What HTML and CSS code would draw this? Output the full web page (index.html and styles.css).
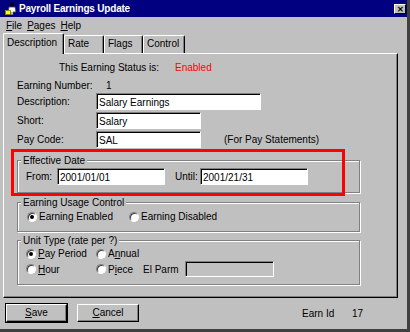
FILE: index.html
```html
<!DOCTYPE html>
<html lang="en">
<head>
  <meta charset="UTF-8" />
  <title>Payroll Earnings Update</title>
  <link rel="stylesheet" href="styles.css">
</head>
<body>
  <div class="window">
    <div class="titlebar">
      <svg class="app-icon" width="12" height="13" viewBox="0 0 12 13">
        <circle cx="7" cy="2.5" r="2" fill="#000"/>
        <path d="M4 5 L10 5 L11 10 L8 10 L8 13 L6 13 L6 10 L3 10 Z" fill="#fff" stroke="#404040" stroke-width="0.8"/>
        <rect x="0.5" y="8.5" width="5" height="4" fill="#ffff00" stroke="#808000" stroke-width="0.8"/>
      </svg>
      <span class="title">Payroll Earnings Update</span>
      <span class="close">&#x2715;</span>
    </div>

    <div class="menubar">
      <span class="menu-item"><u>F</u>ile</span>
      <span class="menu-item"><u>P</u>ages</span>
      <span class="menu-item"><u>H</u>elp</span>
    </div>

    <div class="tabs">
      <div class="tab active">Description</div>
      <div class="tab tab-rate">Rate</div>
      <div class="tab tab-flags">Flags</div>
      <div class="tab tab-control">Control</div>
    </div>

    <div class="panel">
      <div class="status">
        <span class="status-label">This Earning Status is:</span>
        <span class="status-value">Enabled</span>
      </div>

      <div class="info-row">
        <span class="label">Earning Number:</span>
        <span class="number">1</span>
      </div>
      <div class="field-row first">
        <span class="label">Description:</span>
        <span class="input wide">Salary Earnings</span>
      </div>
      <div class="field-row">
        <span class="label">Short:</span>
        <span class="input">Salary</span>
      </div>
      <div class="field-row">
        <span class="label">Pay Code:</span>
        <span class="input">SAL</span>
        <span class="note">(For Pay Statements)</span>
      </div>

      <div class="group group-date">
        <div class="group-title">Effective Date</div>
        <div class="date-row">
          <span class="date-label">From:</span>
          <span class="input date">2001/01/01</span>
          <span class="date-label until">Until:</span>
          <span class="input date">2001/21/31</span>
        </div>
      </div>

      <div class="group group-usage">
        <div class="group-title">Earning Usage Control</div>
        <div class="usage-row">
          <span class="radio checked"></span><span class="usage-text">Earning Enabled</span>
          <span class="radio"></span><span>Earning Disabled</span>
        </div>
      </div>

      <div class="group group-unit">
        <div class="group-title">Unit Type (rate per ?)</div>
        <div class="unit-grid">
          <span class="opt"><span class="radio checked"></span><u>P</u>ay Period</span>
          <span class="opt"><span class="radio"></span>A<u>n</u>nual</span>
          <span></span>
          <span></span>
          <span class="opt"><span class="radio"></span><u>H</u>our</span>
          <span class="opt"><span class="radio"></span>P<u>i</u>ece</span>
          <span class="el-label">El Parm</span>
          <span class="input disabled"></span>
        </div>
      </div>

      <div class="highlight"></div>
    </div>

    <div class="footer">
      <span class="btn default"><u>S</u>ave</span>
      <span class="btn"><u>C</u>ancel</span>
      <span class="earn-label">Earn Id</span>
      <span class="earn-value">17</span>
    </div>
  </div>
</body>
</html>
```

FILE: styles.css
```css
* {
  box-sizing: border-box;
}
body {
  margin: 0;
  background: #404040;
  font-family: "Liberation Sans", Arial, sans-serif;
  font-size: 10px;
  color: #000;
}
u {
  text-decoration: underline;
  text-underline-offset: 1px;
}
.window {
  width: 407px;
  height: 329px;
  background: #c0c0c0;
  display: flex;
  flex-direction: column;
}

/* title + menu */
.titlebar {
  height: 17px;
  background: #000080;
  color: #fff;
  display: flex;
  align-items: center;
  padding: 0 1px 0 5px;
}
.app-icon {
  margin-right: 2px;
  flex: none;
}
.title {
  flex: 1;
  font-weight: bold;
  letter-spacing: -0.2px;
}
.close {
  width: 12px;
  height: 10px;
  background: #c0c0c0;
  color: #000;
  font-size: 8px;
  font-weight: bold;
  line-height: 9px;
  text-align: center;
  border-top: 1px solid #fff;
  border-left: 1px solid #fff;
  border-right: 1px solid #000;
  border-bottom: 1px solid #000;
}
.menubar {
  height: 16px;
  display: flex;
  align-items: center;
  padding-left: 6px;
}
.menu-item {
  margin-right: 5px;
}

/* tabs */
.tabs {
  height: 20px;
  display: flex;
  align-items: flex-end;
  padding-left: 3px;
}
.tab {
  height: 18px;
  line-height: 16px;
  padding-left: 3px;
  border-top: 1px solid #fff;
  border-left: 1px solid #fff;
  border-right: 1px solid #000;
  box-shadow: inset -1px 0 #808080;
  border-radius: 2px 2px 0 0;
}
.tab.active {
  width: 61px;
  height: 21px;
  line-height: 18px;
  margin-bottom: -1px;
  background: #c0c0c0;
  position: relative;
  z-index: 1;
}
.tab-rate { width: 40px; }
.tab-flags { width: 39px; }
.tab-control { width: 42px; }

/* panel */
.panel {
  position: relative;
  margin-left: 3px;
  width: 395px;
  height: 245px;
  border-top: 1px solid #fff;
  border-left: 1px solid #fff;
  border-right: 1px solid #000;
  border-bottom: 1px solid #000;
  box-shadow: inset -1px -1px #808080;
  padding: 0 13px;
}
.status {
  margin-top: 7px;
  height: 13px;
  line-height: 13px;
  padding-left: 42px;
  display: flex;
}
.status-label {
  width: 116px;
}
.status-value {
  color: #f00;
}
.info-row {
  margin-top: 4px;
  height: 15px;
  line-height: 15px;
  display: flex;
}
.field-row {
  margin-top: 2px;
  height: 17px;
  display: flex;
  align-items: center;
}
.field-row.first {
  margin-top: 0;
}
.label {
  width: 79px;
  flex: none;
}
.number {
  padding-left: 10px;
}
.input {
  display: block;
  height: 17px;
  width: 105px;
  line-height: 15px;
  padding: 1px 0 0 2px;
  background: #fff;
  border-top: 1px solid #808080;
  border-left: 1px solid #808080;
  border-right: 1px solid #fff;
  border-bottom: 1px solid #fff;
  box-shadow: inset 1px 1px #000;
  white-space: nowrap;
}
.input.wide {
  width: 165px;
}
.note {
  margin-left: 23px;
}

/* group boxes */
.group {
  width: 343px;
  border: 1px solid #808080;
  box-shadow: inset 1px 1px #fff, 1px 1px #fff;
}
.group-title {
  width: max-content;
  margin: -7px 0 0 3px;
  padding: 0 2px;
  height: 13px;
  line-height: 13px;
  background: #c0c0c0;
}
.group-date {
  margin-top: 12px;
  padding-bottom: 7px;
}
.date-row {
  margin-top: 1px;
  padding-left: 8px;
  display: flex;
  align-items: center;
}
.date-label {
  width: 31px;
}
.date-label.until {
  width: 25px;
  margin-left: 10px;
}
.input.date {
  width: 108px;
}
.group-usage {
  margin-top: 9px;
  padding-bottom: 8px;
}
.usage-row {
  margin-top: 1px;
  height: 13px;
  padding-left: 9px;
  display: flex;
  align-items: center;
}
.usage-text {
  width: 90px;
}
.radio {
  width: 10px;
  height: 10px;
  flex: none;
  margin-right: 2px;
  border-radius: 50%;
  background: #fff;
  border: 1px solid;
  border-color: #808080 #fff #fff #808080;
  box-shadow: inset 1px 1px #404040;
  position: relative;
}
.radio.checked::after {
  content: "";
  position: absolute;
  left: 2px;
  top: 2px;
  width: 4px;
  height: 4px;
  border-radius: 50%;
  background: #000;
}
.group-unit {
  margin-top: 8px;
  padding-bottom: 7px;
}
.unit-grid {
  padding-left: 8px;
  display: grid;
  grid-template-columns: 70px 47px 42px 89px;
  grid-template-rows: 13px 16px;
  row-gap: 1px;
  align-items: center;
}
.opt {
  display: flex;
  align-items: center;
}
.input.disabled {
  width: 89px;
  height: 16px;
  background: #c0c0c0;
}
.highlight {
  position: absolute;
  left: 7px;
  top: 95px;
  width: 334px;
  height: 47px;
  border: 3px solid #f00;
}

/* footer */
.footer {
  display: flex;
  align-items: center;
  padding: 6px 0 0 6px;
}
.btn {
  width: 62px;
  height: 18px;
  line-height: 16px;
  text-align: center;
  border-top: 1px solid #fff;
  border-left: 1px solid #fff;
  border-right: 1px solid #000;
  border-bottom: 1px solid #000;
  box-shadow: inset -1px -1px #808080;
  margin-right: 9px;
}
.btn.default {
  width: 61px;
  margin-right: 10px;
  box-shadow: 0 0 0 1px #000, inset -1px -1px #808080;
}
.earn-label {
  margin-left: 154px;
  width: 50px;
}
```
